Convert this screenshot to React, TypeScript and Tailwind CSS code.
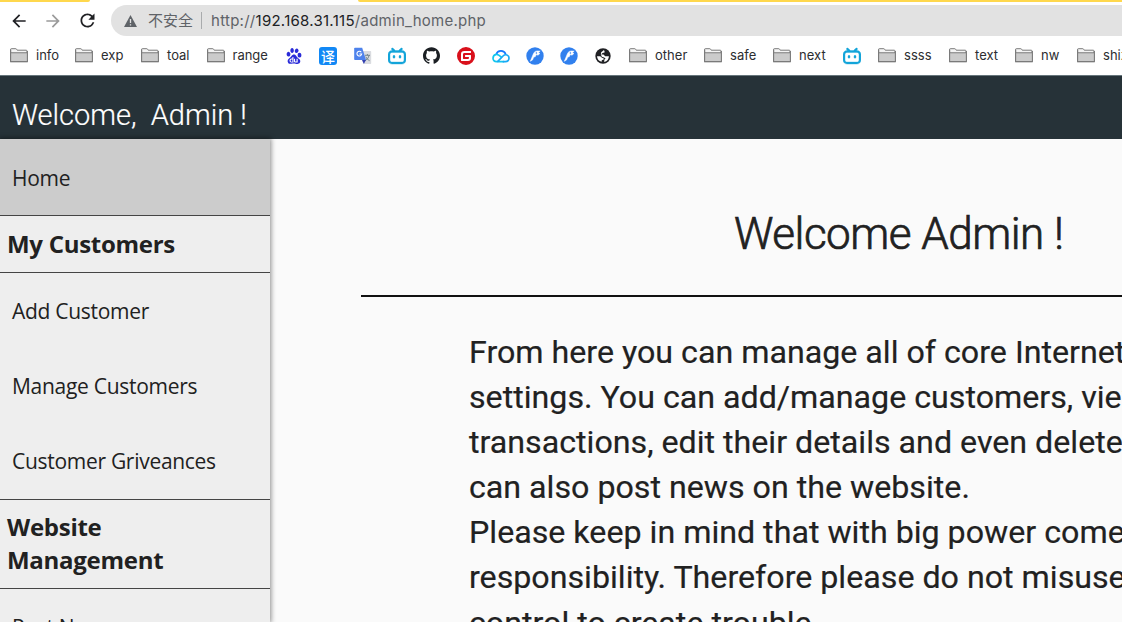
import type { ReactNode } from "react";
import { SiBaidu, SiBilibili, SiGitee, SiGithub } from "react-icons/si";
import { MdArrowBack, MdArrowForward, MdRefresh } from "react-icons/md";

function Folder() {
  return (
    <svg width="18" height="15" viewBox="0 0 18 15" className="shrink-0">
      <path d="M.6 13.6V1.4Q.6.7 1.3.7h4.5q.5 0 .8.5l.6 1h9q.8 0 .8.8v10.6Z" fill="#f4f4f4" stroke="#7a7a7a" strokeWidth="1" />
      <path d="M1 5h16v8.6H1Z" fill="#cbcbcb" />
      <path d="M.6 4.7h16.8M.6 1.4v12.2h16.8V3" fill="none" stroke="#7a7a7a" strokeWidth="1.1" />
    </svg>
  );
}

function Translate() {
  return (
    <span className="flex size-[18px] items-center justify-center rounded-[3px] bg-[#1288f5] font-['Noto_Sans_CJK_SC',sans-serif] text-[14px] leading-none font-medium text-white">
      译
    </span>
  );
}

function GoogleTranslate() {
  return (
    <svg width="18" height="18" viewBox="0 0 18 18">
      <path d="M7 4h9.4q.8 0 .8.8v11.4q0 .8-.8.8H10Z" fill="#dadce0" />
      <path d="M11 8.3h5M13.4 7v1.3M15.2 8.3q-.8 3.7-4 5.4M11.8 9.7q1 2.8 3.8 4" fill="none" stroke="#6b7f86" strokeWidth=".9" />
      <path d="M8 13h4l-2.2 4Z" fill="#3340b0" />
      <path d="M1 .8h7.2L12 13H1Q.2 13 .2 12.200V1.600Q.2.8 1 .8Z" fill="#4d82ec" />
      <path d="M7.300 5.200A2.400 2.400 0 1 0 7.700 7H5.400" fill="none" stroke="#fff" strokeWidth="1.100" />
    </svg>
  );
}

function Cloud() {
  return (
    <svg width="18" height="14" viewBox="0 0 18 14" fill="none" strokeWidth="1.700" strokeLinecap="round">
      <path d="M4.300 5.200A4.900 4.600 0 0 1 13.600 5" stroke="#1677ff" />
      <path d="M11.500 12.700H4.500C-.2 12.700 0 6.100 4.300 5.400 6.500 5.200 7.600 6.600 9.400 8.300" stroke="#12c6ee" />
      <path d="M5.800 12.300 11 7C13.500 4.600 17 6 17 9.100c0 2.300-1.700 3.600-3.600 3.600h-2" stroke="#19a9f5" />
    </svg>
  );
}

function BlueTool() {
  return (
    <svg width="18" height="18" viewBox="0 0 18 18">
      <circle cx="9" cy="9" r="8.700" fill="#3180ee" />
      <path d="M4.300 14.300 7.500 6.500Q8.500 3.800 11.300 3.900L14.200 4.100 12.500 5.400 13.900 6.600 12 8.200 10.400 7.600 9.200 9.800 7.800 10 6.500 13Z" fill="#fff" stroke="#fff" strokeWidth=".5" />
      <circle cx="10.400" cy="6" r=".8" fill="#3180ee" />
    </svg>
  );
}

function Globe() {
  return (
    <svg width="16" height="16" viewBox="0 0 16 16">
      <circle cx="8" cy="8" r="7.700" fill="#202124" />
      <path d="M9 2 6.200 4.200 5.800 6.500H8.500L10.200 8.200H13.900Q13.800 12.800 9.200 13.900L9.400 11.600 10.600 10.800 9.200 9.600 6.800 8.800 6 6.800 7.200 5.200 9.800 4.200Z" fill="#fff" />
      <path d="M2 8.200H5.200L7 9.700 8.800 10.400 8.700 11.600 6.800 12.200 6.600 13.800Q2.400 12.700 2 8.200Z" fill="#fff" />
    </svg>
  );
}

function Tv() {
  return <SiBilibili size={18} color="#14a5da" stroke="#14a5da" strokeWidth={0.500} />;
}

type Bookmark = { label?: string; icon?: ReactNode; width: string };

const bookmarks: Bookmark[] = [
  { label: "info", width: "w-[65px]" },
  { label: "exp", width: "w-[66px]" },
  { label: "toal", width: "w-[65.500px]" },
  { label: "range", width: "w-[79px]" },
  { icon: <SiBaidu size={16} color="#2a2bd8" />, width: "w-[33.500px]" },
  { icon: <Translate />, width: "w-[35px]" },
  { icon: <GoogleTranslate />, width: "w-[34px]" },
  { icon: <Tv />, width: "w-[35px]" },
  { icon: <SiGithub size={17} color="#1b1f23" />, width: "w-[34px]" },
  { icon: <SiGitee size={18} color="#d9101b" />, width: "w-[34.500px]" },
  { icon: <Cloud />, width: "w-[34.200px]" },
  { icon: <BlueTool />, width: "w-[34.200px]" },
  { icon: <BlueTool />, width: "w-[35.200px]" },
  { icon: <Globe />, width: "w-[34px]" },
  { label: "other", width: "w-[75px]" },
  { label: "safe", width: "w-[69px]" },
  { label: "next", width: "w-[70px]" },
  { icon: <Tv />, width: "w-[35px]" },
  { label: "ssss", width: "w-[71px]" },
  { label: "text", width: "w-[66px]" },
  { label: "nw", width: "w-[62px]" },
  { label: "shiz", width: "w-[80px]" },
];

function Browser() {
  return (
    <div className="h-[75px] shrink-0 bg-white font-[Inter,sans-serif]">
      <div className="flex h-[2px] justify-between">
        <span className="h-[1.500px] w-[90px] rounded-br-sm bg-[#ffd84d]" />
        <span className="h-[1.500px] w-[764px] rounded-bl-sm bg-[#ffd84d]" />
      </div>
      <div className="flex h-[37px] items-center pl-[9px]">
        <MdArrowBack size={20} color="#202124" />
        <MdArrowForward size={20} color="#9b9b9b" className="ml-[14px]" />
        <MdRefresh size={21} color="#202124" className="ml-[14px]" />
        <div className="ml-[13px] flex h-[31px] grow items-center rounded-l-full bg-[#e2e2e2] pl-[13px] text-[15px] whitespace-nowrap text-[#5f6368]">
          <svg width="13" height="12" viewBox="0 0 13 12">
            <path d="M6.500 0 13 12H0Z" fill="#5f6368" />
            <path d="M6.500 4v4M6.500 9.200v1.300" stroke="#e2e2e2" strokeWidth="1.300" />
          </svg>
          <span className="ml-[11px] font-['Noto_Sans_CJK_SC',sans-serif]">不安全</span>
          <span className="ml-[8px] h-[17px] w-px bg-[#a9abad]" />
          <span className="ml-[9px] pt-px tracking-[0.265px]">
            http://<span className="text-[#202124]">192.168.31.115</span>/admin_home.php
          </span>
        </div>
      </div>
      <div className="flex h-[33px] items-center overflow-hidden pl-[10px] text-[13px] text-[#2c2d30]">
        {bookmarks.map((b, i) => (
          <span key={i} className={`flex shrink-0 items-center gap-2 ${b.width}`}>
            {b.icon ?? <Folder />}
            {b.label}
          </span>
        ))}
      </div>
    </div>
  );
}

function Item({ children }: { children: ReactNode }) {
  return (
    <div className="flex h-[75.300px] shrink-0 items-center pt-[2px] pl-[12px] text-[21px] tracking-[-0.290px]">{children}</div>
  );
}

function Section({ children, height }: { children: ReactNode; height: string }) {
  return (
    <div className={`flex shrink-0 items-center border-y border-[#444] pl-[7px] text-[24px] leading-[32.500px] font-bold tracking-[-0.280px] ${height}`}>
      <span className="w-[200px]">{children}</span>
    </div>
  );
}

const lines = [
  "From here you can manage all of core Internet banking",
  "settings. You can add/manage customers, view their",
  "transactions, edit their details and even delete them. You",
  "can also post news on the website.",
  "Please keep in mind that with big power comes great",
  "responsibility. Therefore please do not misuse this",
  "control to create trouble.",
];

export default function App() {
  return (
    <div className="flex h-[622px] w-[1122px] flex-col overflow-hidden bg-[#fafafa] text-[#212121]">
      <Browser />
      <header className="flex h-[64px] shrink-0 items-end border-t border-[#66757b] bg-[#263238] pb-[5px] pl-[12px] font-['Roboto',sans-serif] text-[29px] leading-[38px] font-light whitespace-pre text-white [-webkit-text-stroke:0.200px_white]">
        {"Welcome,  Admin !"}
      </header>
      <div className="flex min-h-0 grow">
        <nav className="flex w-[270px] shrink-0 flex-col bg-[#eeeeee] font-['Open_Sans',sans-serif] shadow-[0_0_5px_1px_rgba(0,0,0,0.45)]">
          <div className="flex h-[76px] shrink-0 items-center bg-[#cccccc] pt-[3px] pl-[12px] text-[21px] tracking-[-0.290px]">Home</div>
          <Section height="h-[58px]">My Customers</Section>
          <Item>Add Customer</Item>
          <Item>Manage Customers</Item>
          <Item>Customer Griveances</Item>
          <Section height="h-[90px]">Website Management</Section>
          <Item>Post News</Item>
        </nav>
        <main className="min-w-0 grow overflow-hidden pl-[91px] font-['Roboto',sans-serif]">
          <h1 className="flex h-[158px] items-end border-b-2 border-[#111] pb-[35px] pl-[373px] text-[44px] leading-[52px] font-light tracking-[-0.500px] whitespace-nowrap [-webkit-text-stroke:0.700px_#212121]">
            Welcome Admin !
          </h1>
          <div className="pt-[33px] pl-[108px] text-[32.200px] leading-[45.100px] whitespace-nowrap [-webkit-text-stroke:0.200px_#212121]">
            {lines.map((line) => (
              <p key={line}>{line}</p>
            ))}
          </div>
        </main>
      </div>
    </div>
  );
}
